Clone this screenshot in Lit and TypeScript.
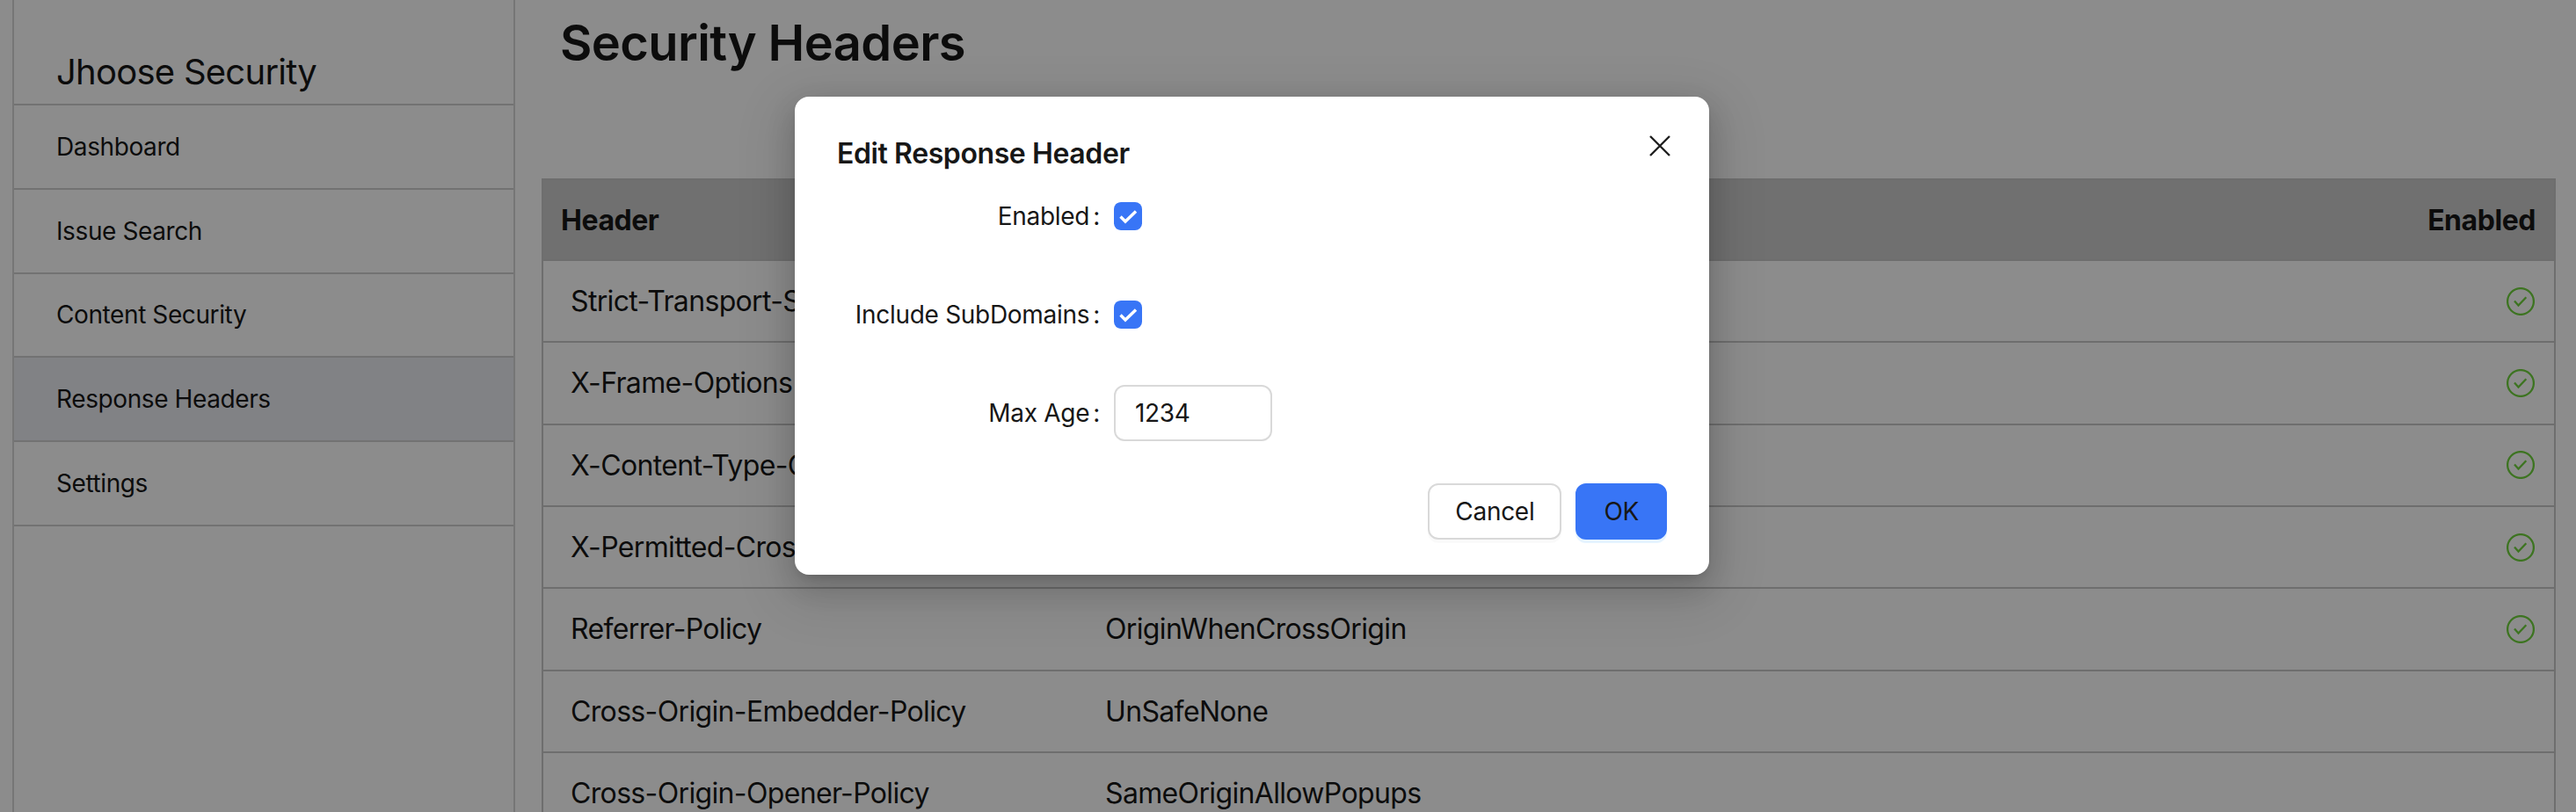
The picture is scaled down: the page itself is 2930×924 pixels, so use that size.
import { LitElement, html, css } from 'lit';
import { customElement } from 'lit/decorators.js';
import { classMap } from 'lit/directives/class-map.js';

const navItems = ['Dashboard', 'Issue Search', 'Content Security', 'Response Headers', 'Settings'];

const rows = [
  { name: 'Strict-Transport-Security', value: '', enabled: true },
  { name: 'X-Frame-Options', value: '', enabled: true },
  { name: 'X-Content-Type-Options', value: '', enabled: true },
  { name: 'X-Permitted-Cross-Domain-Policies', value: '', enabled: true },
  { name: 'Referrer-Policy', value: 'OriginWhenCrossOrigin', enabled: true },
  { name: 'Cross-Origin-Embedder-Policy', value: 'UnSafeNone', enabled: false },
  { name: 'Cross-Origin-Opener-Policy', value: 'SameOriginAllowPopups', enabled: false },
];

const okIcon = html`<svg class="ok" width="32" height="32" viewBox="0 0 32 32" fill="none">
  <circle cx="16" cy="16" r="14.9" stroke="#6fd33c" stroke-width="2.3" />
  <path d="M9 15.5l4.5 5 8.8-9.2" stroke="#6fd33c" stroke-width="2.3" />
</svg>`;

const tick = html`<svg width="32" height="32" viewBox="0 0 32 32" fill="none">
  <path d="M7.5 16.5l5.5 5.5L25 10.5" stroke="#fff" stroke-width="3.4" />
</svg>`;

@customElement('app-root')
export class AppRoot extends LitElement {
  static styles = css`
    :host {
      display: block;
      position: relative;
      height: 924px;
      overflow: hidden;
      background: #fff;
      color: #171717;
      font-family: Inter, 'Noto Sans', sans-serif;
      font-size: 28px;
    }

    .layout {
      display: flex;
      height: 924px;
      padding-left: 14px;
    }

    .sidebar {
      width: 572px;
      flex: none;
      box-sizing: border-box;
      border-left: 2px solid #d8d8d8;
      border-right: 2px solid #d8d8d8;
    }

    .brand {
      height: 120px;
      box-sizing: border-box;
      padding: 52px 0 0 48px;
      font-size: 40px;
      line-height: 60px;
      letter-spacing: -0.75px;
      border-bottom: 2px solid #d0d0d0;
    }

    .nav-item {
      height: 95.8px;
      box-sizing: border-box;
      padding-left: 48px;
      display: flex;
      align-items: center;
      letter-spacing: -0.4px;
      border-bottom: 2px solid #d0d0d0;
    }

    .nav-item.active {
      background: #ebedf3;
    }

    .main {
      flex: 1;
      min-width: 0;
      padding: 0 23px 0 30px;
    }

    h1 {
      margin: 0;
      height: 203px;
      padding: 13px 0 0 21px;
      box-sizing: border-box;
      font-size: 56px;
      line-height: 72px;
      font-weight: 600;
      letter-spacing: -0.6px;
    }

    table {
      width: 100%;
      border-collapse: collapse;
      table-layout: fixed;
      font-size: 32px;
      letter-spacing: -0.65px;
    }

    th,
    td {
      height: 91.33px;
      padding: 0;
      border-top: 2px solid #c8c8c8;
      border-bottom: 2px solid #c8c8c8;
      text-align: left;
      font-weight: 400;
    }

    tr > :first-child {
      border-left: 2px solid #c8c8c8;
    }

    tr > :last-child {
      border-right: 2px solid #c8c8c8;
      text-align: right;
      padding-right: 21px;
    }

    th {
      height: 90px;
      background: #cccccc;
      font-weight: 700;
      letter-spacing: -0.45px;
      padding-left: 20px;
    }

    td.name {
      padding-left: 31px;
    }

    .col-name {
      width: 640px;
    }

    .col-on {
      width: 200px;
    }

    .ok {
      display: block;
      margin-left: auto;
      margin-right: 1px;
    }

    .mask {
      position: absolute;
      inset: 0;
      background: rgba(0, 0, 0, 0.45);
    }

    .modal {
      position: absolute;
      left: 904px;
      top: 110px;
      width: 1040px;
      height: 544px;
      box-sizing: border-box;
      padding: 40px 48px;
      background: #fff;
      border-radius: 16px;
      letter-spacing: -0.3px;
      box-shadow: 0 12px 32px rgba(0, 0, 0, 0.16), 0 6px 12px -8px rgba(0, 0, 0, 0.24),
        0 18px 56px 16px rgba(0, 0, 0, 0.1);
    }

    .close {
      position: absolute;
      left: 972px;
      top: 44px;
      width: 24px;
      height: 24px;
    }

    .modal-title {
      height: 64px;
      font-size: 32px;
      line-height: 50px;
      font-weight: 600;
      letter-spacing: -0.4px;
    }

    .form-row {
      display: flex;
      align-items: center;
      height: 64px;
      margin-bottom: 48px;
    }

    .form-label {
      width: 315px;
      flex: none;
      box-sizing: border-box;
      padding-right: 16px;
      text-align: right;
    }

    .form-label::after {
      content: ':';
      margin-left: 4px;
    }

    .check {
      width: 32px;
      height: 32px;
      border-radius: 8px;
      background: #3875f6;
    }

    .check svg {
      display: block;
    }

    .input {
      width: 180px;
      height: 64px;
      box-sizing: border-box;
      padding-left: 22px;
      display: flex;
      align-items: center;
      border: 2px solid #d9d9d9;
      border-radius: 12px;
    }

    .footer {
      display: flex;
      justify-content: flex-end;
      gap: 16px;
    }

    .btn {
      height: 64px;
      box-sizing: border-box;
      padding: 0 29px;
      font: inherit;
      letter-spacing: inherit;
      color: inherit;
      background: #fff;
      border: 2px solid #d9d9d9;
      border-radius: 12px;
      box-shadow: 0 4px 0 rgba(0, 0, 0, 0.02);
    }

    .btn.primary {
      padding: 0 30px;
      background: #3875f6;
      border-color: #3875f6;
      box-shadow: 0 4px 0 rgba(5, 145, 255, 0.1);
    }
  `;

  render() {
    return html`
      <div class="layout">
        <aside class="sidebar">
          <div class="brand">Jhoose Security</div>
          ${navItems.map(
            (item) =>
              html`<div class=${classMap({ 'nav-item': true, active: item === 'Response Headers' })}>${item}</div>`
          )}
        </aside>
        <main class="main">
          <h1>Security Headers</h1>
          <table>
            <colgroup>
              <col class="col-name" />
              <col />
              <col class="col-on" />
            </colgroup>
            <tr>
              <th>Header</th>
              <th></th>
              <th>Enabled</th>
            </tr>
            ${rows.map(
              (row) => html`<tr>
                <td class="name">${row.name}</td>
                <td>${row.value}</td>
                <td>${row.enabled ? okIcon : ''}</td>
              </tr>`
            )}
          </table>
        </main>
      </div>
      <div class="mask"></div>
      <div class="modal">
        <svg class="close" viewBox="0 0 24 24" fill="none">
          <path d="M1 1l22 22M23 1L1 23" stroke="#1f1f1f" stroke-width="2.4" />
        </svg>
        <div class="modal-title">Edit Response Header</div>
        <div class="form-row">
          <div class="form-label">Enabled</div>
          <div class="check">${tick}</div>
        </div>
        <div class="form-row">
          <div class="form-label">Include SubDomains</div>
          <div class="check">${tick}</div>
        </div>
        <div class="form-row">
          <div class="form-label">Max Age</div>
          <div class="input">1234</div>
        </div>
        <div class="footer">
          <button class="btn">Cancel</button>
          <button class="btn primary">OK</button>
        </div>
      </div>
    `;
  }
}
